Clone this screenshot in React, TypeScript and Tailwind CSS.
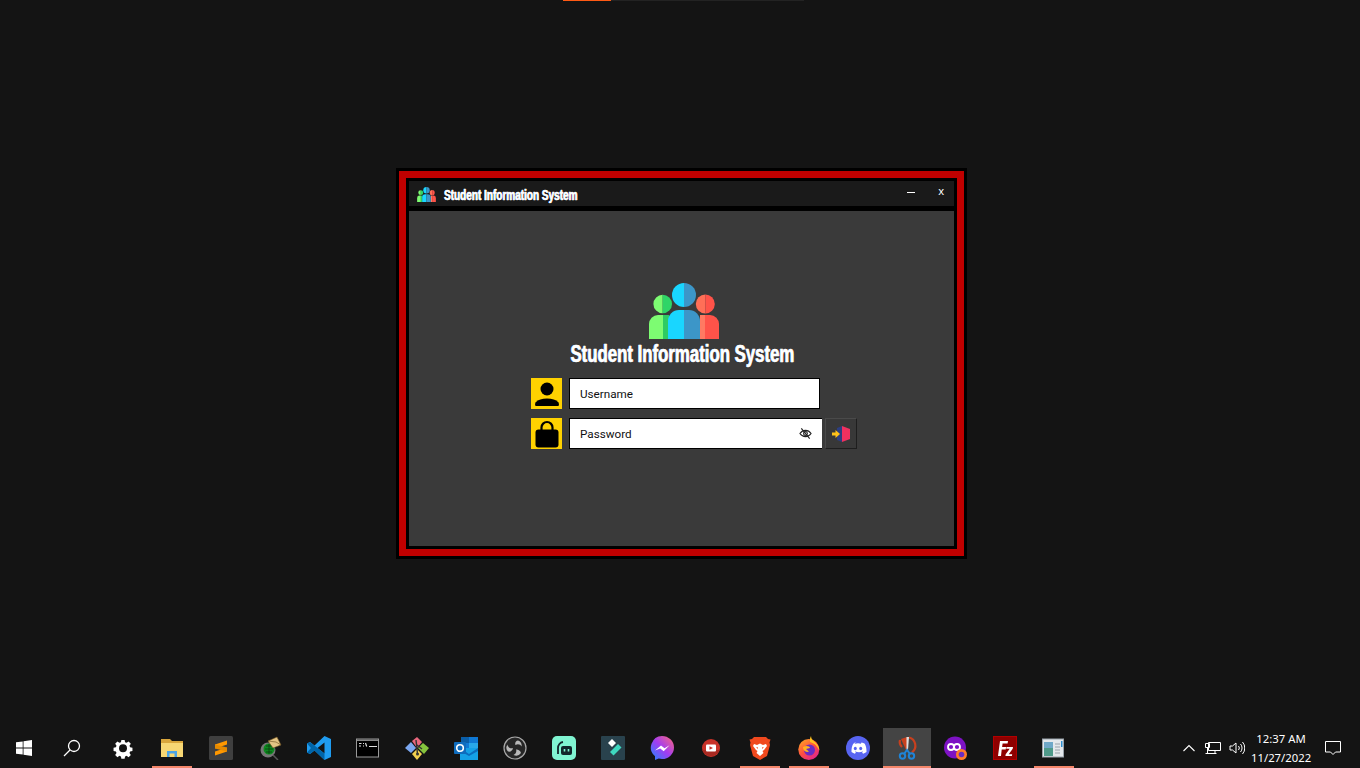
import type { ReactNode } from "react";

const People = ({ className }: { className: string }) => (
  <svg viewBox="0 0 70 56" className={className}>
    <path d="M0 56V41a9 9 0 0 1 9-9h5v24z" fill="#7dfc72" />
    <path d="M14 32h6v24h-6z" fill="#2ecb63" />
    <path d="M51 32h5v24h-5z" fill="#ff7a62" />
    <path d="M56 32h5a9 9 0 0 1 9 9v15H56z" fill="#ff5349" />
    <path d="M13.7 11.7a9.3 9.3 0 0 0 0 18.6z" fill="#7dfc72" />
    <path d="M13.7 11.7a9.3 9.3 0 0 1 0 18.6z" fill="#2fd567" />
    <path d="M56.3 11.5a9.5 9.5 0 0 0 0 19z" fill="#ff6f57" />
    <path d="M56.3 11.5a9.5 9.5 0 0 1 0 19z" fill="#ff5349" />
    <path d="M19 56V38a11 11 0 0 1 11-11h5v29z" fill="#19d6ff" />
    <path d="M35 27h5a11 11 0 0 1 11 11v18H35z" fill="#3c96c8" />
    <path d="M35 0a12 12 0 0 0 0 24z" fill="#19d6ff" />
    <path d="M35 0a12 12 0 0 1 0 24z" fill="#3c96c8" />
  </svg>
);

const Icon = ({ children }: { children: ReactNode }) => (
  <svg viewBox="0 0 24 24" className="w-6 h-6">
    {children}
  </svg>
);

const icons: { key: string; line?: boolean; active?: boolean; node: ReactNode }[] = [
  {
    key: "settings",
    node: (
      <Icon>
        <path
          d="M10.2 3h3.6l.5 2.6 1.7.7 2.2-1.5 2.5 2.500-1.500 2.200.7 1.700 2.600.5v3.600l-2.600.5-.7 1.700 1.500 2.200-2.500 2.500-2.200-1.500-1.700.7-.5 2.600h-3.600l-.5-2.600-1.700-.7-2.200 1.500-2.500-2.500 1.500-2.200-.7-1.700-2.600-.5v-3.600l2.600-.5.7-1.700-1.500-2.200 2.500-2.500 2.200 1.500 1.700-.7z"
          transform="translate(1.2 1.2) scale(.9)"
          fill="#fff"
        />
        <circle cx="12" cy="12.300" r="4" fill="#141414" />
      </Icon>
    ),
  },
  {
    key: "explorer",
    line: true,
    node: (
      <Icon>
        <path d="M1 3h9l2 2h11v16H1z" fill="#d9a63c" />
        <path d="M1 7h22v14H1z" fill="#f7d774" />
        <path d="M7 21v-6h10v6h-2.500v-3.500h-5V21z" fill="#4ba3e6" />
      </Icon>
    ),
  },
  {
    key: "sublime",
    node: (
      <Icon>
        <rect width="24" height="24" rx="1.500" fill="#3f3f3f" />
        <path d="M18 4.500v4L6 12.500v-4zM18 11.500v4L6 19.500v-4z" fill="#ff9800" />
        <path d="M6 8.500l12 3v4L6 12.500z" fill="#e58a00" />
      </Icon>
    ),
  },
  {
    key: "mail",
    node: (
      <Icon>
        <circle cx="10" cy="14" r="7.500" fill="#777" />
        <circle cx="11" cy="13" r="5.500" fill="#0c8a1e" />
        <path d="M8 10h6M7 13h8M8 16h6M11 8v10" stroke="#0a3a0c" strokeWidth=".8" />
        <path d="M15 19l5 5" stroke="#555" strokeWidth="1.500" />
        <path d="M10 5l9-4 4 8-8 3z" fill="#e3c484" stroke="#6b4f1e" strokeWidth=".6" />
        <path d="M10 5l8 1 5 3" stroke="#6b4f1e" strokeWidth=".6" fill="none" />
      </Icon>
    ),
  },
  {
    key: "vscode",
    node: (
      <Icon>
        <path d="M17.500 0L24 3v18l-6.500 3-10-9.500L3 18l-3-1.500v-9L3 6l4.500 3.500zM17.500 6.500L10.500 12l7 5.500z" fill="#1f9cf0" />
        <path d="M0 7.500L3 6l14.500 11.500V24L7.500 14.500 3 18l-3-1.500L4 12z" fill="#0065a9" />
      </Icon>
    ),
  },
  {
    key: "cmd",
    node: (
      <Icon>
        <rect x=".5" y="3" width="22" height="18" fill="#000" stroke="#999" />
        <path d="M1 3.500h21v1.500H1z" fill="#888" />
        <path d="M3 7.500h2.500M3 10h2M7 7.500h1M7 10h1M9.500 7l1.200 3.500M13 10.500h8" stroke="#ddd" strokeWidth="1.200" />
      </Icon>
    ),
  },
  {
    key: "git",
    node: (
      <Icon>
        <path d="M7 5l5-4 5 5-5 6z" fill="#e8677d" />
        <path d="M13 12l5-5 6 5-5 6z" fill="#86c33d" />
        <path d="M7 18l5-5 5 5-5 6z" fill="#f2d04f" />
        <path d="M0 12l6-6 5 6-5 5z" fill="#7ba7f0" />
        <path d="M11 4l1.500 14M12 9l5 4" stroke="#333" strokeWidth="1.400" />
        <circle cx="12.500" cy="18" r="1.500" fill="#333" />
      </Icon>
    ),
  },
  {
    key: "outlook",
    node: (
      <Icon>
        <path d="M7 1h17v12H7z" fill="#0f78d4" />
        <path d="M7 1h8v6H7z" fill="#0a5ea8" />
        <path d="M15 7h9v6h-9z" fill="#28a8ea" />
        <path d="M6 12h18v12H6z" fill="#14a0e6" />
        <path d="M6 12l9 6 9-6v3l-9 5-9-5z" fill="#0a6cbd" />
        <rect y="6" width="12" height="12" rx="1" fill="#0f6cbd" />
        <circle cx="6" cy="12" r="3.300" fill="none" stroke="#fff" strokeWidth="1.600" />
      </Icon>
    ),
  },
  {
    key: "obs",
    node: (
      <Icon>
        <circle cx="12" cy="12" r="11" fill="#262626" stroke="#a8a8a8" strokeWidth="1.200" />
        <path d="M15 4.500a5 5 0 0 1 3.500 6c-1-2-3.500-3-6-1.500-1-2 .5-4.500 2.500-4.500zM5 15.500a5.500 5.500 0 0 1-.5-7c.2 2.500 2.500 4.500 5.500 3.500-.3 2.500-2.500 4.200-5 3.500zM18 17a6 6 0 0 1-7.500 2c2-.7 3.500-3 2.500-5.500 2-.3 4.500 1 5 3.500z" fill="#b8b8b8" />
      </Icon>
    ),
  },
  {
    key: "streamlabs",
    node: (
      <Icon>
        <rect width="24" height="24" rx="5" fill="#80f5d2" />
        <path d="M6 18v-6a6 6 0 0 1 5-6" stroke="#11272b" strokeWidth="1.800" fill="none" />
        <rect x="9" y="10" width="11" height="9" rx="2" fill="#11272b" />
        <path d="M12.500 13v2.500M16.500 13v2.500" stroke="#80f5d2" strokeWidth="1.600" />
      </Icon>
    ),
  },
  {
    key: "filmora",
    node: (
      <Icon>
        <rect width="24" height="24" rx="1" fill="#29424d" />
        <path d="M11 3l4 4-4 4-4-4z" fill="#fff" />
        <path d="M17 8l3.500 3.500-8 8L9 16z" fill="#3fd8c0" />
      </Icon>
    ),
  },
  {
    key: "messenger",
    node: (
      <Icon>
        <defs>
          <linearGradient id="msg" x1="0" y1="1" x2="1" y2="0">
            <stop offset="0" stopColor="#1e88ff" />
            <stop offset=".5" stopColor="#a33cf0" />
            <stop offset="1" stopColor="#ff6a7a" />
          </linearGradient>
        </defs>
        <path d="M12 0a12 11.500 0 0 1 0 23c-1.200 0-2.300-.2-3.300-.5L5 24v-3.700A11.500 11.500 0 0 1 12 0z" fill="url(#msg)" />
        <path d="M5 14.500l6-5 3.500 2.700 5-3-5.800 6-3.500-2.700z" fill="#fff" />
      </Icon>
    ),
  },
  {
    key: "youtube",
    node: (
      <Icon>
        <circle cx="12" cy="12" r="9" fill="#c83228" />
        <path d="M3.500 14h17a9 9 0 0 1-17 0z" fill="#a82a22" />
        <rect x="7" y="8.500" width="10" height="7" rx="1" fill="#fff" />
        <path d="M10.500 10.300l3.500 1.700-3.500 1.700z" fill="#c83228" />
      </Icon>
    ),
  },
  {
    key: "brave",
    line: true,
    node: (
      <Icon>
        <path d="M6 1h12l2 2 2.500.5-1 3L22 9l-3 11-7 4-7-4L2 9l.5-2.500-1-3L4 3z" fill="#f0491e" />
        <path d="M6 8l3 1 3-1.500L15 9l3-1 1 2-3 4-1.500 1 1 2-3.500 3-3.500-3 1-2L8 14l-3-4z" fill="#fff" />
        <path d="M8 11l2 .5v1.500zM16 11l-2 .5v1.500z" fill="#f0491e" />
      </Icon>
    ),
  },
  {
    key: "firefox",
    line: true,
    node: (
      <Icon>
        <defs>
          <linearGradient id="ff" x1="0" y1="0" x2=".7" y2="1">
            <stop offset="0" stopColor="#ffb21f" />
            <stop offset=".55" stopColor="#ff4f3f" />
            <stop offset="1" stopColor="#e3258e" />
          </linearGradient>
        </defs>
        <circle cx="11.800" cy="13.500" r="10.500" fill="url(#ff)" />
        <path d="M14 0c0 3 2 4.500 4.500 6.500 2.500 2.500 4 5 3.700 8-2-4-4-7-9-8.500C12.500 4 13 2 14 0z" fill="#ffc21f" />
        <circle cx="12.500" cy="14" r="5.500" fill="#6a2cc4" />
        <path d="M6 11c3-2 7-1 7 1l-4 1 3 2.500c-3 1.500-6-1-6-4.500z" fill="#ffb21f" />
      </Icon>
    ),
  },
  {
    key: "discord",
    node: (
      <Icon>
        <circle cx="12" cy="12" r="12" fill="#5865f2" />
        <path d="M8.500 6.500l.6 1.200a12 12 0 0 1 5.800 0l.6-1.200c1.300.2 2.400.7 3.300 1.300 1.400 2.500 1.800 5.300 1.700 8.200-1.100.9-2.300 1.400-3.500 1.700l-.9-1.400 1-.6-.3-.3c-2.400 1.100-5.200 1.100-7.600 0l-.3.300 1 .6-.9 1.400c-1.200-.3-2.400-.8-3.500-1.700-.1-2.900.3-5.700 1.700-8.200.9-.6 2-1.100 3.300-1.300z" fill="#fff" />
        <ellipse cx="9.300" cy="12.500" rx="1.500" ry="1.700" fill="#5865f2" />
        <ellipse cx="14.700" cy="12.500" rx="1.500" ry="1.700" fill="#5865f2" />
      </Icon>
    ),
  },
  {
    key: "snip",
    active: true,
    line: true,
    node: (
      <Icon>
        <path d="M14 1.500a8.500 8.500 0 0 1 3 15M7 11a7 7 0 0 1-2-7" stroke="#c8401e" strokeWidth="2.200" fill="none" />
        <path d="M6 3l6-2 1 13h-2z" fill="#c8401e" />
        <path d="M11.500 1h2.500l-1 13h-1.500z" fill="#ddd" />
        <circle cx="7.500" cy="20" r="2.700" fill="none" stroke="#1f84d8" strokeWidth="2" />
        <circle cx="16.500" cy="20" r="2.700" fill="none" stroke="#1f84d8" strokeWidth="2" />
        <path d="M9 18l3-4 3 4" stroke="#1f84d8" strokeWidth="2" fill="none" />
      </Icon>
    ),
  },
  {
    key: "mask",
    node: (
      <Icon>
        <circle cx="11" cy="11.500" r="11" fill="#7d12c4" />
        <path d="M4 11a3 3 0 0 1 6 0 3 3 0 0 1-6 0zM10 11a3 3 0 0 1 6 0 3 3 0 0 1-6 0z" fill="none" stroke="#fff" strokeWidth="1.800" />
        <circle cx="17.500" cy="18.500" r="5.500" fill="#ff7a2a" />
        <circle cx="17.500" cy="18.500" r="2.800" fill="#6a2cc4" />
      </Icon>
    ),
  },
  {
    key: "filezilla",
    node: (
      <Icon>
        <rect width="24" height="24" fill="#b30000" />
        <rect x="1" y="1" width="22" height="22" fill="#8f0000" />
        <path d="M5 20L7 5h8l-.4 2.500H9.600l-.5 3.500h4l-.4 2.500h-4L8 20z" fill="#fff" />
        <path d="M13.500 11h6.500l-.3 1.800-4 5.500h3.500l-.3 1.700h-6.500l.3-1.800 4-5.500h-3.500z" fill="#fff" />
      </Icon>
    ),
  },
  {
    key: "news",
    line: true,
    node: (
      <Icon>
        <rect x=".5" y="3" width="21" height="18" fill="#e4e8ec" stroke="#9aa3ab" />
        <path d="M2 6h9v14H2z" fill="#4f9a8a" />
        <path d="M2 6h9v6H2z" fill="#6fa8c8" />
        <path d="M13 8h5M13 11h5M13 14h5M13 17h5" stroke="#98a2aa" />
        <path d="M19 5h1.500v6H19z" fill="#2f8fd0" />
      </Icon>
    ),
  },
];

const FormRow = ({ icon, children }: { icon: ReactNode; children: ReactNode }) => (
  <div className="flex items-center h-[31px]">
    <div className="w-[31px] h-[31px] bg-[#ffd200] flex items-center justify-center">{icon}</div>
    <div className="ml-[7px] flex items-center h-full">{children}</div>
  </div>
);

const titleClass =
  "block whitespace-nowrap font-['Liberation_Sans',sans-serif] font-bold text-white [-webkit-text-stroke:0.35px_white] [text-shadow:-0.5px_0_#6fb4ff,0.5px_0_#ffc48a]";

const inputText = "font-['Roboto',sans-serif] text-[11.7px] text-[#111]";

export default function App() {
  return (
    <div className="w-[1360px] h-[768px] overflow-hidden bg-[#141414] flex flex-col font-['Noto_Sans',sans-serif]">
      <div className="h-px flex pl-[563px]">
        <div className="w-12 bg-[#ff5a14]" />
        <div className="w-[193px] bg-[#232323]" />
      </div>

      <main className="flex-1 pl-[396px] pt-[167px]">
        <div className="w-[571px] h-[391px] border-[3px] border-black bg-[#c00000] p-[7px]">
          <div className="h-full border-[3px] border-black bg-black flex flex-col">
            <div className="h-[25px] bg-[#1a1a1a] flex items-center pl-[7px] pr-[10px]">
              <People className="w-[21px] h-[15px] mt-[2px]" />
              <span className={`ml-[7px] mt-[3px] w-[134px] text-[14px] leading-none origin-left scale-x-[.715] ${titleClass}`}>
                Student Information System
              </span>
              <div className="ml-auto flex items-start h-full pt-[4px]">
                <div className="mt-[7px] w-2 h-px bg-white" />
                <span className="ml-[23px] text-[11px] leading-none text-white">x</span>
              </div>
            </div>
            <div className="mt-[5px] flex-1 bg-[#3a3a3a] pt-[72px] flex flex-col">
              <div className="flex flex-col items-center">
                <People className="w-[70px] h-[56px] ml-[5px]" />
                <h1 className={`mt-[2px] ml-[2px] text-[23px] leading-[26px] scale-x-[.73] ${titleClass}`}>Student Information System</h1>
              </div>
              <div className="ml-[122px] mt-[11px] flex flex-col gap-[9px]">
                <FormRow
                  icon={
                    <svg viewBox="0 0 26 26" className="w-[26px] h-[26px]">
                      <circle cx="13" cy="8" r="6.500" fill="#000" />
                      <path d="M1.500 25a3.500 3.500 0 0 1 0-3.500C4 18.500 8 17.500 13 17.500s9 1 11.500 4a3.500 3.500 0 0 1 0 3.500z" fill="#000" />
                    </svg>
                  }
                >
                  <div className={`w-[251px] h-[31px] bg-white border border-black flex items-center pl-[10px] pt-[3px] ${inputText}`}>
                    Username
                  </div>
                </FormRow>
                <FormRow
                  icon={
                    <svg viewBox="0 0 26 28" className="w-[26px] h-7">
                      <path d="M7.500 11V7.500a5.500 5.500 0 0 1 11 0V11" fill="none" stroke="#000" strokeWidth="2.200" />
                      <rect x="1.500" y="9.500" width="23" height="18" rx="3" fill="#000" />
                    </svg>
                  }
                >
                  <div className={`w-[253px] h-[31px] bg-white border-y border-l border-black flex items-center pl-[10px] pr-[10px] pt-[3px] ${inputText}`}>
                    Password
                    <svg viewBox="0 0 14 14" className="ml-auto -mt-[3px] w-[13px] h-[13px]" fill="none" stroke="#222" strokeWidth="1.200">
                      <path d="M1 7c3-4.500 9-4.500 12 0-3 4.500-9 4.500-12 0z" />
                      <circle cx="7" cy="7" r="2" />
                      <path d="M2.500 1.500l9 11" />
                    </svg>
                  </div>
                  <button className="ml-[3px] w-[32px] h-[31px] bg-[#383838] border border-t-[#4a4a4a] border-l-[#4a4a4a] border-r-[#1e1e1e] border-b-[#1e1e1e] flex items-center justify-center">
                    <svg viewBox="0 0 18 18" className="w-[18px] h-[18px]">
                      <path d="M5 3l5-2v16l-5-2z" fill="#2c3e80" />
                      <path d="M10 1l8 3v10l-8 3z" fill="#f0305f" />
                      <path d="M0 7.500h3.500V5L8 9l-4.500 4v-2.500H0z" fill="#ffc21a" />
                    </svg>
                  </button>
                </FormRow>
              </div>
            </div>
          </div>
        </div>
      </main>

      <footer className="h-10 flex items-center text-white">
        <div className="w-12 h-full flex items-center justify-center">
          <svg viewBox="0 0 16 16" className="w-4 h-4" fill="#fff">
            <path d="M0 2.300l6.700-.9v6.200H0zM7.500 1.300L16 0v7.600H7.500zM0 8.400h6.700v6.200L0 13.700zM7.500 8.400H16V16l-8.500-1.200z" />
          </svg>
        </div>
        <div className="w-12 h-full flex items-center justify-center">
          <svg viewBox="0 0 18 18" className="w-[18px] h-[18px]" fill="none" stroke="#fff" strokeWidth="1.300">
            <circle cx="11" cy="7" r="5.500" />
            <path d="M7 11l-6 6" />
          </svg>
        </div>
        <div className="ml-[2px] flex h-full">
          {icons.map((it) => (
            <div key={it.key} className="relative w-[49px] h-full flex items-center pl-[13px]">
              {it.active && <div className="absolute inset-y-0 left-px right-0 bg-[#444]" />}
              {it.line && (
                <div
                  className={
                    it.active
                      ? "absolute bottom-0 left-px right-0 h-[2px] bg-[#f4866a]"
                      : "absolute bottom-0 left-[5px] w-10 h-[2px] bg-[#f4866a]"
                  }
                />
              )}
              <div className="relative">{it.node}</div>
            </div>
          ))}
        </div>
        <div className="ml-auto mr-[19px] flex items-center h-full">
          <svg viewBox="0 0 12 8" className="w-3 h-2" fill="none" stroke="#fff" strokeWidth="1.100">
            <path d="M.5 7L6 1.500 11.500 7" />
          </svg>
          <svg viewBox="0 0 16 16" className="ml-[10px] w-4 h-4" fill="none" stroke="#fff">
            <path d="M3.500 2.500h12v8h-12zM.5 3.500h4v4h-4zM2.500 7.500v6M10 10.500v3M.5 13.500h11" />
          </svg>
          <svg viewBox="0 0 16 16" className="ml-[8px] w-4 h-4" fill="none" stroke="#fff">
            <path d="M1 6h2.500L7 3v10L3.500 10H1zM9.500 6a3 3 0 0 1 0 4M11.500 4a6 6 0 0 1 0 8M13.500 2a9 9 0 0 1 0 12" />
          </svg>
          <div className="ml-[6px] w-[60px] text-center whitespace-nowrap text-[11.3px] leading-[19px]">
            <div>12:37 AM</div>
            <div>11/27/2022</div>
          </div>
          <svg viewBox="0 0 16 16" className="ml-[14px] w-4 h-4" fill="none" stroke="#fff">
            <path d="M.5 1.500h15v10.500h-5L8 14.500 5.500 12h-5z" />
          </svg>
        </div>
      </footer>
    </div>
  );
}
